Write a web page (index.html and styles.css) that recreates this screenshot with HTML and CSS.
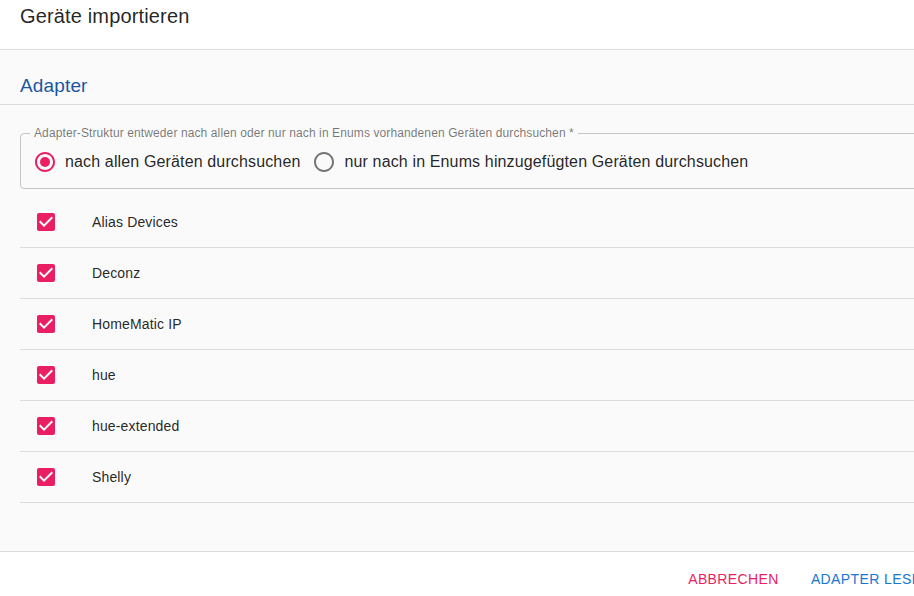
FILE: index.html
```html
<!DOCTYPE html>
<html lang="de">
<head>
<meta charset="utf-8">
<title>Geräte importieren</title>
<link rel="stylesheet" href="styles.css">
</head>
<body>
<div class="dialog">
  <header class="dlg-header">
    <h2 class="dlg-title">Geräte importieren</h2>
  </header>
  <main class="dlg-content">
    <div class="subheader">Adapter</div>
    <div class="fieldbox">
      <span class="legend">Adapter-Struktur entweder nach allen oder nur nach in Enums vorhandenen Geräten durchsuchen *</span>
      <div class="radios">
        <label class="radio">
          <svg class="radio-icon checked" viewBox="0 0 24 24" width="24" height="24"><path d="M12 2C6.48 2 2 6.48 2 12s4.48 10 10 10 10-4.48 10-10S17.52 2 12 2zm0 18c-4.42 0-8-3.58-8-8s3.58-8 8-8 8 3.58 8 8-3.58 8-8 8z"/><circle cx="12" cy="12" r="5"/></svg>
          <span class="radio-label">nach allen Geräten durchsuchen</span>
        </label>
        <label class="radio">
          <svg class="radio-icon" viewBox="0 0 24 24" width="24" height="24"><path d="M12 2C6.48 2 2 6.48 2 12s4.48 10 10 10 10-4.48 10-10S17.52 2 12 2zm0 18c-4.42 0-8-3.58-8-8s3.58-8 8-8 8 3.58 8 8-3.58 8-8 8z"/></svg>
          <span class="radio-label">nur nach in Enums hinzugefügten Geräten durchsuchen</span>
        </label>
      </div>
    </div>
    <ul class="list">
      <li class="row"><svg class="cb" viewBox="0 0 24 24" width="24" height="24"><path d="M19 3H5c-1.11 0-2 .9-2 2v14c0 1.1.89 2 2 2h14c1.11 0 2-.9 2-2V5c0-1.1-.89-2-2-2zm-9 14l-5-5 1.41-1.41L10 14.17l7.59-7.59L19 8l-9 9z"/></svg><span class="row-text">Alias Devices</span></li>
      <li class="row"><svg class="cb" viewBox="0 0 24 24" width="24" height="24"><path d="M19 3H5c-1.11 0-2 .9-2 2v14c0 1.1.89 2 2 2h14c1.11 0 2-.9 2-2V5c0-1.1-.89-2-2-2zm-9 14l-5-5 1.41-1.41L10 14.17l7.59-7.59L19 8l-9 9z"/></svg><span class="row-text">Deconz</span></li>
      <li class="row"><svg class="cb" viewBox="0 0 24 24" width="24" height="24"><path d="M19 3H5c-1.11 0-2 .9-2 2v14c0 1.1.89 2 2 2h14c1.11 0 2-.9 2-2V5c0-1.1-.89-2-2-2zm-9 14l-5-5 1.41-1.41L10 14.17l7.59-7.59L19 8l-9 9z"/></svg><span class="row-text">HomeMatic IP</span></li>
      <li class="row"><svg class="cb" viewBox="0 0 24 24" width="24" height="24"><path d="M19 3H5c-1.11 0-2 .9-2 2v14c0 1.1.89 2 2 2h14c1.11 0 2-.9 2-2V5c0-1.1-.89-2-2-2zm-9 14l-5-5 1.41-1.41L10 14.17l7.59-7.59L19 8l-9 9z"/></svg><span class="row-text">hue</span></li>
      <li class="row"><svg class="cb" viewBox="0 0 24 24" width="24" height="24"><path d="M19 3H5c-1.11 0-2 .9-2 2v14c0 1.1.89 2 2 2h14c1.11 0 2-.9 2-2V5c0-1.1-.89-2-2-2zm-9 14l-5-5 1.41-1.41L10 14.17l7.59-7.59L19 8l-9 9z"/></svg><span class="row-text">hue-extended</span></li>
      <li class="row"><svg class="cb" viewBox="0 0 24 24" width="24" height="24"><path d="M19 3H5c-1.11 0-2 .9-2 2v14c0 1.1.89 2 2 2h14c1.11 0 2-.9 2-2V5c0-1.1-.89-2-2-2zm-9 14l-5-5 1.41-1.41L10 14.17l7.59-7.59L19 8l-9 9z"/></svg><span class="row-text">Shelly</span></li>
    </ul>
  </main>
  <footer class="dlg-actions">
    <button class="btn btn-cancel" type="button">Abbrechen</button>
    <button class="btn btn-primary" type="button">Adapter lesen</button>
  </footer>
</div>
</body>
</html>
```

FILE: styles.css
```css
html, body {
  margin: 0;
  padding: 0;
  background: #ffffff;
  overflow: hidden;
}
body {
  width: 914px;
  height: 596px;
  font-family: "Liberation Sans", Arial, sans-serif;
  color: rgba(0, 0, 0, 0.87);
}
.dialog {
  width: 948px;
  height: 596px;
  display: flex;
  flex-direction: column;
  background: #ffffff;
}
.dlg-header {
  flex-shrink: 0;
  height: 49px;
  border-bottom: 1px solid #dcdcdc;
  padding: 0 20px;
  box-sizing: content-box;
}
.dlg-title {
  margin: 0;
  font-weight: 400;
  font-size: 20px;
  letter-spacing: 0.15px;
  line-height: 33px;
  color: rgba(0, 0, 0, 0.87);
}
.dlg-content {
  flex-shrink: 0;
  height: 502px;
  box-sizing: border-box;
  background: #fafafa;
  border-bottom: 1px solid #dcdcdc;
}
.subheader {
  height: 55px;
  box-sizing: border-box;
  padding: 20px 20px 0;
  border-bottom: 1px solid #dcdcdc;
  font-size: 19px;
  letter-spacing: 0.15px;
  line-height: 32px;
  color: #1a57a0;
}
.fieldbox {
  position: relative;
  margin: 28px 0 0 20px;
  border: 1px solid #c4c4c4;
  border-radius: 4px;
  height: 42px;
  padding: 7px 0 5px 12px;
  box-sizing: content-box;
}
.legend {
  position: absolute;
  top: -8px;
  left: 9px;
  padding: 0 4px;
  background: #fafafa;
  font-size: 12px;
  letter-spacing: 0.11px;
  line-height: 14px;
  color: rgba(0, 0, 0, 0.54);
  white-space: nowrap;
}
.radios {
  display: flex;
  align-items: center;
  height: 42px;
}
.radio {
  display: flex;
  align-items: center;
  margin-right: 12px;
}
.radio-icon {
  display: block;
  fill: #757575;
  margin-right: 8px;
}
.radio-icon.checked {
  fill: #e91e63;
}
.radio-label {
  font-size: 16px;
  letter-spacing: 0.14px;
  line-height: 24px;
  color: rgba(0, 0, 0, 0.87);
  white-space: nowrap;
}
.list {
  list-style: none;
  margin: 8px 0 0 20px;
  padding: 0;
}
.row {
  display: flex;
  align-items: center;
  height: 50px;
  border-bottom: 1px solid #dcdcdc;
  padding-left: 14px;
}
.cb {
  display: block;
  fill: #e91e63;
  margin-right: 34px;
}
.row-text {
  font-size: 14px;
  letter-spacing: 0.15px;
  color: rgba(0, 0, 0, 0.87);
}
.dlg-actions {
  flex: 1;
  min-height: 0;
  display: flex;
  justify-content: flex-end;
  align-items: center;
  padding: 10px 8px 0;
  gap: 16px;
}
.btn {
  border: 0;
  background: transparent;
  font-family: "Liberation Sans", Arial, sans-serif;
  font-size: 14px;
  font-weight: 400;
  letter-spacing: 0.4px;
  text-transform: uppercase;
  padding: 6px 8px;
  line-height: 24px;
  cursor: pointer;
}
.btn-cancel { color: #e91e63; }
.btn-primary { color: #1976d2; }
```
